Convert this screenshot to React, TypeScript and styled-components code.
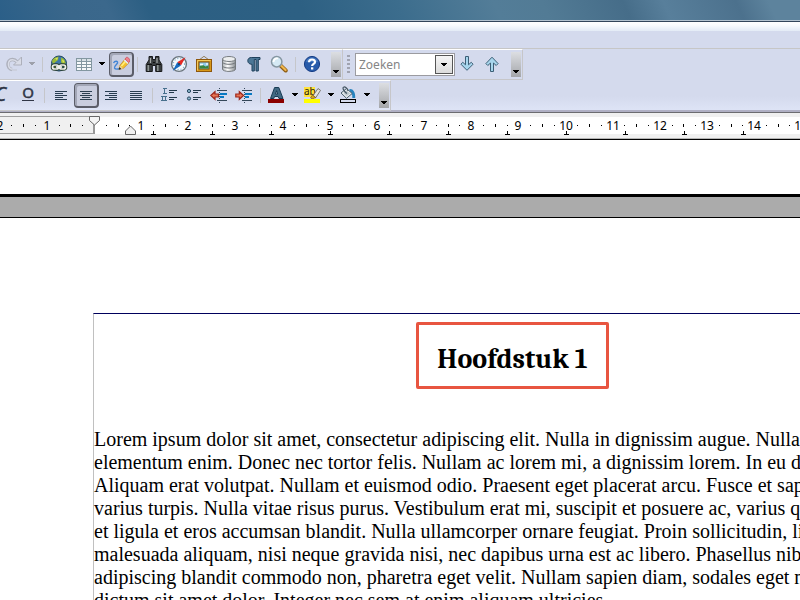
import React from 'react';
import styled, { createGlobalStyle } from 'styled-components';

const GlobalStyle = createGlobalStyle`
  * { box-sizing: border-box; }
  body { margin: 0; background: #fff; overflow: hidden; }
  button, input { font: inherit; margin: 0; }
`;

const Window = styled.div`
  display: flex;
  flex-direction: column;
  height: 100vh;
  overflow: hidden;
  font-family: 'Noto Sans', 'Open Sans', sans-serif;
  font-size: 12px;
  color: #000;
`;

const Desktop = styled.div`
  flex: none;
  height: 20px;
  background: linear-gradient(65deg, #2b5f88 0%, #3a678b 9%, #3b688c 14%, #2c5f83 19%, #2d6083 38%, #3c6d8d 50%, #537d98 62%, #527b95 68%, #466d89 78%, #587f9b 83%, #4c718d 92%, #5d839d 96%);
`;

const TitleEdge = styled.div`
  flex: none;
  height: 11px;
  border-top: 1px solid #b4c3cf;
  background: linear-gradient(#33465a 1px, #fff 1px, #fafcfe 4px, #e3ebf6);
`;

const MenuArea = styled.div`
  flex: none;
  height: 17px;
  background: #d4daed;
`;

const Toolbars = styled.div`
  flex: none;
  background: linear-gradient(#d4daed 75%, #dfe5f7);
  border-top: 1px solid #c6c6c6;
  border-bottom: 1px solid #6c6c70;
  box-shadow: inset 0 -2px #b0b0c4;
  height: 65px;
  overflow: hidden;
`;

const ToolRow = styled.div`
  display: flex;
  align-items: stretch;
  height: 31px;
`;

const Band = styled.div<{ $shift?: boolean }>`
  display: flex;
  align-items: center;
  flex: none;
  padding-left: ${(p) => (p.$shift ? '0' : '2px')};
  margin-left: ${(p) => (p.$shift ? '-9px' : '0')};
  border-top: 1px solid #fff;
  border-bottom: 1px solid #c6c6c9;
  border-right: 1px solid #c6c6c9;
  background: linear-gradient(#d4daed 60%, ${(p) => (p.$shift ? '#dfe5f7' : '#d4daed')});
`;

const ToolButton = styled.button<{ $active?: boolean }>`
  display: flex;
  align-items: center;
  justify-content: center;
  flex: none;
  width: 25px;
  height: 25px;
  padding: ${(p) => (p.$active ? '0' : '0 1px 1px 0')};
  border: ${(p) => (p.$active ? 'solid #5b5d68' : '0')};
  border-width: ${(p) => (p.$active ? '1px 2px 2px 1px' : '0')};
  border-radius: 4px;
  background: ${(p) => (p.$active ? '#c9cdde' : 'transparent')};
  box-shadow: ${(p) => (p.$active ? 'inset 1px 1px 0 1px #a3a7b7' : 'none')};
  svg { flex: none; }
`;

const ArrowButton = styled.button<{ $wide?: boolean }>`
  display: flex;
  align-items: center;
  justify-content: center;
  flex: none;
  width: ${(p) => (p.$wide ? '12px' : '11px')};
  height: 25px;
  padding: 0 1px 2px 0;
  border: 0;
  background: transparent;
  svg { flex: none; }
`;

const Separator = styled.div`
  flex: none;
  width: 8px;
  height: 15px;
  border-left: 3px solid transparent;
  background: linear-gradient(90deg, #c5c6ca 1px, transparent 1px);
  background-clip: padding-box;
`;

const MoreButton = styled.button<{ $gap: number }>`
  display: flex;
  align-items: flex-end;
  justify-content: center;
  flex: none;
  width: 10px;
  height: 25px;
  padding: 0 0 3px;
  margin-left: ${(p) => p.$gap}px;
  margin-right: 1px;
  border: 0;
  background: linear-gradient(#dcdee2, #a4a6aa);
`;

const Grip = styled.div`
  flex: none;
  width: 3px;
  height: 19px;
  margin: 0 5px 0 2px;
  background: repeating-linear-gradient(#a0a3b0 0 2px, transparent 2px 4px);
`;

const SearchBox = styled.div`
  display: flex;
  flex: none;
  width: 100px;
  height: 23px;
  padding: 1px;
  border: 1px solid #9b9ba0;
  background: #fff;
`;

const SearchInput = styled.input`
  flex: 1;
  min-width: 0;
  padding: 0 2px 1px;
  border: 0;
  outline: 0;
  background: transparent;
  color: #333;
  font-size: 12px;
  &::placeholder { color: #858585; opacity: 1; }
`;

const SearchDrop = styled.button`
  display: flex;
  align-items: center;
  justify-content: center;
  width: 18px;
  padding: 0;
  border: 1px solid #555;
  background: linear-gradient(#f5f5f5, #dcdcdc);
`;

const RulerBar = styled.div`
  flex: none;
  height: 27px;
  background: #f0f0f0;
  border-bottom: 1px solid #000;
  box-shadow: inset 0 -1px #b5b5b5;
  overflow: hidden;
  svg { display: block; }
`;

const Document = styled.main`
  flex: 1;
  min-height: 0;
  overflow: hidden;
  background: #fff;
`;

const PreviousPage = styled.div`
  height: 57px;
  border-bottom: 3px solid #000;
`;

const PageGap = styled.div`
  height: 21px;
  background: #ababab;
  border-bottom: 1px solid #000;
`;

const TextFrame = styled.article`
  margin: 95px -131px 0 93px;
  border-top: 1px solid #00005c;
  border-left: 1px solid #c0c0c0;
  display: flex;
  flex-direction: column;
  font-family: 'Liberation Serif', 'Times New Roman', serif;
`;

const Heading = styled.h1`
  align-self: center;
  margin: 8px 0 39px;
  padding: 22px 18px 14px;
  border: 3px solid #e85540;
  border-radius: 2px;
  font-family: Cambria, Caladea, 'Liberation Serif', serif;
  font-size: 28px;
  line-height: 25px;
  font-weight: 700;
  white-space: nowrap;
`;

const Paragraph = styled.p`
  margin: 0;
  font-size: 20px;
  line-height: 23px;
`;

const Line = styled.span`
  display: block;
  white-space: nowrap;
`;

const Caret = ({ color = '#000' }: { color?: string }) => (
  <svg width="7" height="4" viewBox="0 0 7 4" shapeRendering="crispEdges" aria-hidden="true">
    <path d="M0 0H6V1H5V2H4V3H2V2H1V1H0Z" fill={color} />
  </svg>
);

const Icon = ({ children, size = 18 }: { children: React.ReactNode; size?: number }) => (
  <svg width={size} height={size} viewBox="0 0 18 18" aria-hidden="true">{children}</svg>
);

const RedoIcon = () => (
  <Icon>
    <path d="M7 14.500C1.500 13.500 1.500 4.500 7.500 4.500C9.500 4.500 11 5.500 12.300 7" fill="none" stroke="#adb0bb" strokeWidth="3.400" />
    <path d="M16.500 2V10H8.500Z" fill="#d9dce7" stroke="#adb0bb" />
    <path d="M7 14.200C2.200 13 2.200 4.700 7.500 4.700C9.500 4.700 11 5.600 12.500 7.300" fill="none" stroke="#d9dce7" strokeWidth="1.500" />
    <path d="M7 15H12" stroke="#c3c6cf" />
  </Icon>
);

const GlobeIcon = () => (
  <Icon>
    <circle cx="9" cy="8.5" r="7.5" fill="#3e78a9" stroke="#21455f" />
    <path d="M4 3L8.500 1.500L8 5L5.5 7L3 9L2 6Z M11 2.500L14 4L15.8 8L13 10L11 7Z M4 11L7 12L7 15L4 13Z" fill="#9aba35" />
    <path d="M5 3.5L8 2.5L7 5Z M12 4.500L14.500 6L13 8Z" fill="#dfe667" />
    <g fill="none" stroke="#2b4130" strokeWidth="3.6"><rect x="2.5" y="10" width="6" height="4" rx="2" /><rect x="9.5" y="10" width="6" height="4" rx="2" /></g>
    <g fill="none" stroke="#f1f1ec" strokeWidth="1.7"><rect x="2.5" y="10" width="6" height="4" rx="2" /><rect x="9.5" y="10" width="6" height="4" rx="2" /><path d="M6 12H12" /></g>
  </Icon>
);

const TableIcon = () => (
  <Icon>
    <g shapeRendering="crispEdges">
      <rect x="1" y="3" width="16" height="13" fill="#f6f9fb" />
      <rect x="1" y="3" width="16" height="3" fill="#d8e1e6" />
      <path d="M1 3.5H17M1 6.5H17M1 9.5H17M1 12.5H17M1 15.5H17M1.5 3V16M6.5 3V16M11.5 3V16M16.5 3V16" stroke="#8397a1" />
    </g>
  </Icon>
);

const SpellIcon = () => (
  <Icon>
    <path d="M1.500 8C3 5.500 6 6 5.500 8C5 9.500 2 11 2.500 13C3 14.500 5.500 14.200 7.500 13.800" fill="none" stroke="#3f83d6" strokeWidth="1.4" />
    <path d="M7 14.500L8 10.300L13 4L17 7.800L11.500 13.300Z" fill="#f5c12c" stroke="#b97a18" strokeWidth=".6" />
    <path d="M9.400 11L14 5.700" stroke="#fff07d" strokeWidth="1.6" />
    <path d="M7 14.500L8 10.500L11 13.400Z" fill="#e8d2a0" />
    <path d="M6.800 14.700L7.400 12L9.300 13.900Z" fill="#222" />
    <path d="M11.8 5.500L13 4L16.900 7.600L15.500 9Z" fill="#e3e6ec" />
    <path d="M13 4L14.300 2.400C15.500 1.400 18.500 4.500 17.800 6L16.700 7.500Z" fill="#f0808c" stroke="#c8424f" strokeWidth=".7" />
  </Icon>
);

const BinocularsIcon = () => (
  <Icon>
    <path d="M4 1.500H7.500V4.500H10.5V1.500H14V5L16.8 9.500V16.5H10.7V10.5H7.3V16.5H1.2V9.500L4 5Z" fill="#3a3e40" stroke="#17191a" />
    <path d="M3.300 10V16M12.800 10V16" stroke="#8c9492" strokeWidth="1.6" />
    <path d="M5.500 3V8M12 3V8" stroke="#a9aeac" strokeWidth="1.2" />
    <path d="M2 9.5H7M11 9.5H16M8 7.5H10" stroke="#111" />
  </Icon>
);

const CompassIcon = () => (
  <Icon>
    <circle cx="9" cy="9" r="7.4" fill="#f4f9fc" stroke="#69747d" strokeWidth="1.4" />
    <circle cx="9" cy="9" r="5.6" fill="none" stroke="#7ca6c5" strokeWidth="1.2" strokeDasharray="1 2" />
    <path d="M15.500 2.300L11 10.600L7.200 7.300Z" fill="#e32a24" />
    <path d="M2.800 15.700L7.200 7.300L11 10.600Z" fill="#176bbf" />
    <circle cx="9" cy="9" r="1" fill="#173551" />
  </Icon>
);

const PictureIcon = () => (
  <Icon>
    <path d="M4 5L9 1.3L14 5" fill="none" stroke="#92805e" />
    <rect x="1.5" y="4.5" width="15" height="12" fill="#d79818" stroke="#8e570c" />
    <path d="M2.5 15.5V5.5H15.5" fill="none" stroke="#f3cb5b" />
    <rect x="4" y="7" width="10" height="7" fill="#91cae9" stroke="#76501f" />
    <path d="M4.5 13.5V11L8 10L10.5 11.5L13.5 10.5V13.5Z" fill="#388640" />
    <path d="M5 9.5H8M11 9H13" stroke="#eff9fb" strokeWidth="1.5" />
  </Icon>
);

const DatabaseIcon = () => (
  <Icon>
    <defs><linearGradient id="drum" x2="1"><stop stopColor="#aeb3b6" /><stop offset=".4" stopColor="#fff" /><stop offset="1" stopColor="#888d91" /></linearGradient></defs>
    <path d="M2.5 4V14C2.5 17.2 15.5 17.2 15.5 14V4Z" fill="url(#drum)" stroke="#74797d" />
    <ellipse cx="9" cy="4" rx="6.5" ry="2.5" fill="#eceeef" stroke="#777c80" />
    <path d="M2.5 7.3C4 10 14 10 15.5 7.3M2.5 11C4 13.7 14 13.7 15.5 11" fill="none" stroke="#70757a" />
  </Icon>
);

const PilcrowIcon = () => (
  <Icon>
    <path d="M15 2.500H6.3C1.5 2.500 1.5 9.3 7 9.3V16H9.3V4.500H11V16H13.3V4.500H15Z" fill="#4c7796" stroke="#1e405b" />
  </Icon>
);

const MagnifierIcon = () => (
  <Icon>
    <path d="M10.5 10.5L15.7 15.5" stroke="#8e5e16" strokeWidth="4" strokeLinecap="round" />
    <path d="M11 10.5L15.6 15" stroke="#f0b74e" strokeWidth="2.200" strokeLinecap="round" />
    <circle cx="6.7" cy="6.7" r="5.2" fill="#d5e9f4" stroke="#8596a1" strokeWidth="1.5" />
    <path d="M3.5 7C3.5 4 6 3 8 3.5" fill="none" stroke="#fff" strokeWidth="1.8" />
  </Icon>
);

const HelpIcon = () => (
  <Icon>
    <circle cx="9" cy="9" r="7.6" fill="#285baa" stroke="#173e87" />
    <path d="M3 7C4 1 14 1 15 7Z" fill="#4779bf" />
    <path d="M6 7.2C6 3.5 12.1 3.7 12 7C12 8.8 9.1 8.9 9.1 11" fill="none" stroke="#fff" strokeWidth="2.2" />
    <rect x="8" y="12.3" width="2.3" height="2.2" fill="#fff" />
  </Icon>
);

const DirectionIcon = ({ up }: { up?: boolean }) => (
  <Icon>
    <path d={up
      ? 'M7.5 16.5H10.5V8L13.2 10.500L15.1 8.600L9 2.2L2.9 8.600L4.800 10.500L7.5 8Z'
      : 'M7.5 1.5H10.5V9.800L13.2 7.300L15.1 9.200L9 15.3L2.9 9.200L4.800 7.300L7.5 9.800Z'}
      fill="#a7d5ec" stroke="#3c5f76" strokeLinejoin="round" />
  </Icon>
);

const ItalicIcon = () => (
  <Icon>
    <text x="1" y="15" fontFamily="Noto Sans, sans-serif" fontStyle="italic" fontSize="19" fill="#2c3242" stroke="#2c3242" strokeWidth=".4">C</text>
  </Icon>
);

const UnderlineIcon = () => (
  <Icon>
    <text x="9" y="12" textAnchor="middle" fontFamily="Noto Sans, sans-serif" fontSize="15" fill="#303646" stroke="#303646" strokeWidth=".5">O</text>
    <path d="M3 14.5H15" stroke="#303646" shapeRendering="crispEdges" />
  </Icon>
);

type Align = 'left' | 'center' | 'right' | 'justify';
const AlignIcon = ({ align }: { align: Align }) => {
  const widths = [12, 8, 12, 8, 12];
  return (
    <Icon>
      {widths.map((w, i) => {
        const width = align === 'justify' ? 12 : w;
        const x = align === 'right' ? 15 - width : align === 'center' ? 9 - width / 2 : 3;
        return <rect key={i} x={x} y={5 + i * 2} width={width} height="1" fill="#293e51" shapeRendering="crispEdges" />;
      })}
    </Icon>
  );
};

const NumberIcon = () => (
  <Icon>
    <g shapeRendering="crispEdges">
      <path d="M3 2.500H7M4.500 3V7M3 7.500H7M1 10.500H7M2.500 11V14M5.500 11V14M1 14.500H7" stroke="#47708d" />
      <path d="M9 4.500H17M9 6.500H14M9 11.500H17M9 13.500H14" stroke="#243a4b" />
    </g>
  </Icon>
);

const BulletIcon = () => (
  <Icon>
    <circle cx="4" cy="5" r="1.6" fill="#8cb6cd" stroke="#24455d" />
    <circle cx="4" cy="12.500" r="1.6" fill="#8cb6cd" stroke="#24455d" />
    <path d="M8 4.500H16M8 6.500H13M8 11.500H16M8 13.500H13" stroke="#243a4b" shapeRendering="crispEdges" />
  </Icon>
);

const IndentIcon = ({ out }: { out?: boolean }) => (
  <Icon>
    <g shapeRendering="crispEdges">
      <path d="M7 4.5H17M7 14.5H17" stroke="#344759" />
      <path d="M9.5 2V17" stroke="#344759" strokeDasharray="1 1" />
      <path d="M10 8H17M10 11H14" stroke="#0879c2" strokeWidth="2" />
    </g>
    <path d={out
      ? 'M.8 9.5L5 5.7V8H8.5V11H5V13.3Z'
      : 'M8.5 9.5L4.3 5.7V8H.8V11H4.3V13.3Z'}
      fill="#e97655" stroke="#9d261b" strokeWidth="1.2" />
  </Icon>
);

const FontColorIcon = () => (
  <Icon>
    <path fillRule="evenodd" d="M2.5 12.5L6.6 1.5H10.8L15 12.5H11L10.2 10.5H6.5L5.8 12.5Z M7.5 8H9.7L8.6 4.7Z" fill="#416983" stroke="#183b53" />
    <rect x="0" y="13" width="16" height="4" fill="#8b0000" />
  </Icon>
);

const HighlightIcon = () => (
  <Icon>
    <rect x="0" y="1" width="11" height="10" fill="#ffe13a" />
    <text x="0" y="9" fontFamily="Noto Sans, sans-serif" fontSize="10" fill="#28210a">ab</text>
    <path d="M8.5 10.500L14 2.500L16.500 4.300L11.7 11.800Z" fill="#e8e7df" stroke="#797870" />
    <path d="M8.5 9L11.8 11.500L8 13L6.5 11.8Z" fill="#d9a71c" stroke="#765811" strokeWidth=".7" />
    <rect x="0" y="13" width="16" height="4" fill="#ff0" />
  </Icon>
);

const FillIcon = () => (
  <Icon>
    <path d="M9.500 3C13 2.500 15.600 6 15.200 12H12.300C12.500 8.500 12 7 9.500 6Z" fill="#2784bf" />
    <path d="M1 7L6.500 2.500L12.200 7.500L6.500 12.300Z" fill="#e6eaed" stroke="#485e6b" />
    <path d="M3.500 7L6.500 4.500L10 7.500L6.500 10.300Z" fill="#bfc9ce" />
    <path d="M7 7.5C4.500 6 2 2 3.500 1.2C5 .3 7.500 2.500 8 4.800" fill="none" stroke="#465764" strokeWidth="1.2" />
    <rect x=".5" y="13.5" width="15" height="3" fill="#d4daed" stroke="#000" shapeRendering="crispEdges" />
  </Icon>
);

const UNIT = 47.15;
const ORIGIN = 94;
const CENTIMETRES = Array.from({ length: 44 }, (_, i) => i - 2);
const TAB_STOPS = Array.from({ length: 32 }, (_, i) => i + 1);

const Ruler = () => (
  <svg width="100%" height="26" role="img" aria-label="Liniaal">
    <rect x="94" y="4" width="100%" height="17" fill="#fff" />
    <g shapeRendering="crispEdges">
      <path d="M0 3.5H94M0 20.5H94" stroke="#a0a0a0" />
      {CENTIMETRES.map((cm) => {
        const at = (part: number) => Math.round(ORIGIN + (cm + part) * UNIT);
        return (
          <g key={cm}>
            <rect x={at(0.25)} y="12" width="1" height="1" />
            <rect x={at(0.5)} y="11" width="1" height="3" />
            <rect x={at(0.75)} y="12" width="1" height="1" />
          </g>
        );
      })}
      {TAB_STOPS.map((n) => {
        const x = ORIGIN + n * 59;
        return <path key={n} d={`M${x - 2} 21.5H${x + 3}M${x + 0.5} 18V21`} stroke="#000" />;
      })}
      <rect x="93" y="10" width="2" height="11" fill="#999" />
    </g>
    {CENTIMETRES.filter((cm) => cm !== 0).map((cm) => (
      <text key={cm} x={Math.round(ORIGIN + cm * UNIT)} y="17" textAnchor="middle" fontSize="12" fontFamily="Noto Sans, sans-serif">
        {Math.abs(cm)}
      </text>
    ))}
    <path d="M89.5 3.5H99.5V7.5L94.5 12L89.5 7.5Z" fill="#f4f4f4" stroke="#666" />
    <path d="M125.500 21.500H135.500V18L130.500 13L125.500 18Z" fill="#f0f0f0" stroke="#666" />
  </svg>
);

const LINES = [
  'Lorem ipsum dolor sit amet, consectetur adipiscing elit. Nulla in dignissim augue. Nulla',
  'elementum enim. Donec nec tortor felis. Nullam ac lorem mi, a dignissim lorem. In eu d',
  'Aliquam erat volutpat. Nullam et euismod odio. Praesent eget placerat arcu. Fusce et sap',
  'varius turpis. Nulla vitae risus purus. Vestibulum erat mi, suscipit et posuere ac, varius q',
  'et ligula et eros accumsan blandit. Nulla ullamcorper ornare feugiat. Proin sollicitudin, li',
  'malesuada aliquam, nisi neque gravida nisi, nec dapibus urna est ac libero. Phasellus nib',
  'adipiscing blandit commodo non, pharetra eget velit. Nullam sapien diam, sodales eget n',
  'dictum sit amet dolor. Integer nec sem at enim aliquam ultricies.',
];

interface ToolProps {
  label: string;
  active?: boolean;
  disabled?: boolean;
  children: React.ReactNode;
}

const Tool = ({ label, active, disabled, children }: ToolProps) => (
  <ToolButton type="button" aria-label={label} aria-pressed={active} disabled={disabled} $active={active}>
    {children}
  </ToolButton>
);

const Drop = ({ label, wide, color }: { label: string; wide?: boolean; color?: string }) => (
  <ArrowButton type="button" aria-label={label} $wide={wide}><Caret color={color} /></ArrowButton>
);

const More = ({ gap }: { gap: number }) => (
  <MoreButton type="button" aria-label="Meer" $gap={gap}><Caret /></MoreButton>
);

export default function App() {
  return (
    <Window>
      <GlobalStyle />
      <Desktop />
      <TitleEdge />
      <MenuArea />
      <Toolbars>
        <ToolRow>
          <Band role="toolbar" aria-label="Standaard">
            <Tool label="Opnieuw" disabled><RedoIcon /></Tool>
            <Drop label="Opnieuw-lijst" wide color="#9da0aa" />
            <Separator />
            <Tool label="Hyperlink"><GlobeIcon /></Tool>
            <Tool label="Tabel"><TableIcon /></Tool>
            <Drop label="Tabelopties" wide />
            <Tool label="Tekenfuncties" active><SpellIcon /></Tool>
            <Separator />
            <Tool label="Zoeken en vervangen"><BinocularsIcon /></Tool>
            <Tool label="Navigator"><CompassIcon /></Tool>
            <Tool label="Galerij"><PictureIcon /></Tool>
            <Tool label="Gegevensbronnen"><DatabaseIcon /></Tool>
            <Tool label="Niet-afdrukbare tekens"><PilcrowIcon /></Tool>
            <Tool label="Zoom"><MagnifierIcon /></Tool>
            <Separator />
            <Tool label="Help"><HelpIcon /></Tool>
            <More gap={6} />
          </Band>
          <Band role="toolbar" aria-label="Zoekbalk">
            <Grip />
            <SearchBox>
              <SearchInput type="text" aria-label="Zoeken" placeholder="Zoeken" />
              <SearchDrop type="button" aria-label="Zoekgeschiedenis"><Caret /></SearchDrop>
            </SearchBox>
            <Tool label="Volgende zoeken"><DirectionIcon /></Tool>
            <Tool label="Vorige zoeken"><DirectionIcon up /></Tool>
            <More gap={6} />
          </Band>
        </ToolRow>
        <ToolRow>
          <Band $shift role="toolbar" aria-label="Opmaak">
            <Tool label="Cursief"><ItalicIcon /></Tool>
            <Tool label="Onderstrepen"><UnderlineIcon /></Tool>
            <Separator />
            <Tool label="Links uitlijnen"><AlignIcon align="left" /></Tool>
            <Tool label="Centreren" active><AlignIcon align="center" /></Tool>
            <Tool label="Rechts uitlijnen"><AlignIcon align="right" /></Tool>
            <Tool label="Uitvullen"><AlignIcon align="justify" /></Tool>
            <Separator />
            <Tool label="Nummering"><NumberIcon /></Tool>
            <Tool label="Opsommingstekens"><BulletIcon /></Tool>
            <Tool label="Inspringing verkleinen"><IndentIcon out /></Tool>
            <Tool label="Inspringing vergroten"><IndentIcon /></Tool>
            <Separator />
            <Tool label="Tekstkleur"><FontColorIcon /></Tool>
            <Drop label="Tekstkleur kiezen" />
            <Tool label="Markeren"><HighlightIcon /></Tool>
            <Drop label="Markeerkleur kiezen" />
            <Tool label="Achtergrondkleur"><FillIcon /></Tool>
            <Drop label="Achtergrondkleur kiezen" />
            <More gap={6} />
          </Band>
        </ToolRow>
      </Toolbars>
      <RulerBar><Ruler /></RulerBar>
      <Document>
        <PreviousPage />
        <PageGap />
        <TextFrame>
          <Heading>Hoofdstuk 1</Heading>
          <Paragraph>
            {LINES.map((line) => <Line key={line}>{line}</Line>)}
          </Paragraph>
        </TextFrame>
      </Document>
    </Window>
  );
}
